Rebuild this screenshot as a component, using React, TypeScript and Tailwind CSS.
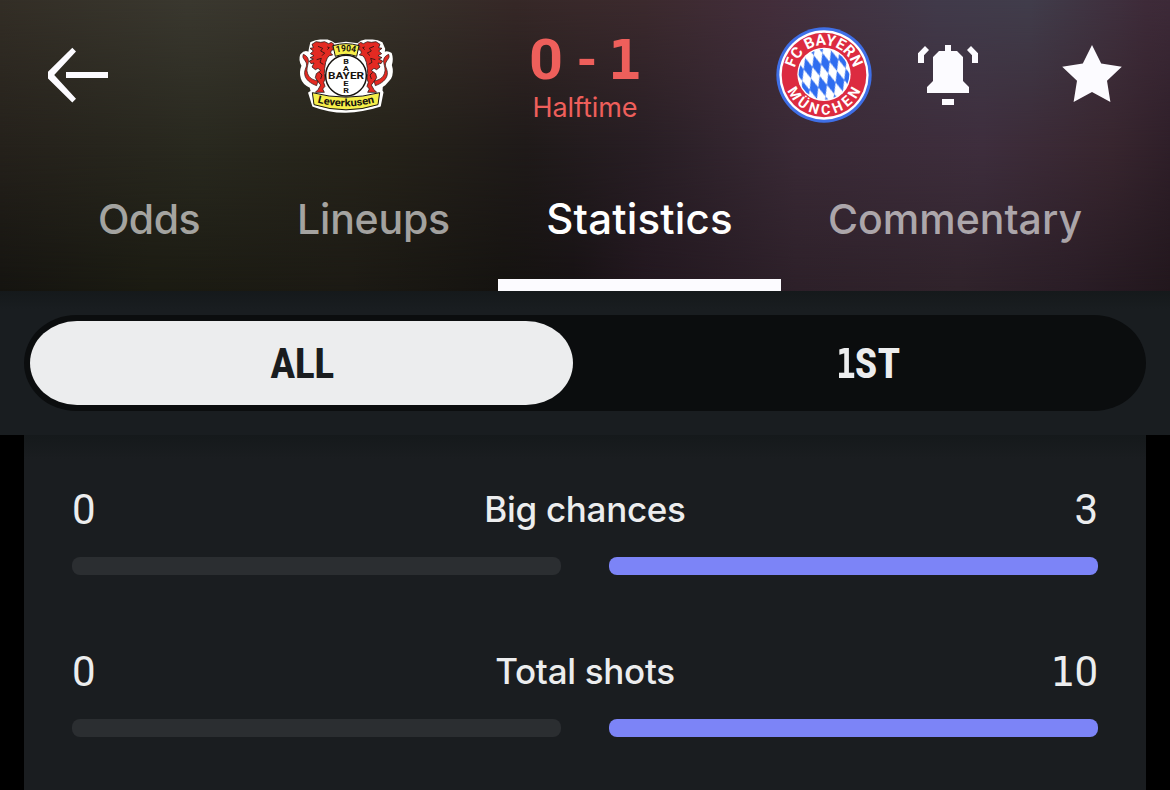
import React from "react";

function BackArrow() {
  return (
    <svg className="h-[60px] w-[60px] shrink-0" viewBox="0 0 60 60" fill="#fcfbff">
      <path d="M24.3 2.7 28 6.6 6.2 30 28 53.7 24.3 57.6 0 33.4V26.7Z" />
      <path d="M18 27h42v6H18z" />
    </svg>
  );
}

function Bell() {
  return (
    <svg className="ml-[46px] h-[60px] w-[60px] shrink-0" viewBox="0 0 60 60" fill="#fcfbff">
      <path d="M27 0h6v6h6l6 6v24l6 6v6H9v-6l6-6V12l6-6h6z" />
      <path d="M24 54h12v6H24z" />
      <path d="M0 18V8.3L7 1l4 4-5 5.2V18zM60 18V8.3L53 1l-4 4 5 5.2V18z" />
    </svg>
  );
}

function Star() {
  return (
    <svg className="ml-[84px] h-[60px] w-[60px] shrink-0" viewBox="0 0 60 60" fill="#fcfbff">
      <path d="M30 0 39.2 18.6 59.8 21.8 45 35.8 48.4 57 30 47 11.6 57 15 35.8.2 21.8 20.8 18.6Z" />
    </svg>
  );
}

function Lion() {
  return (
    <g>
      <path
        d="M66 58 78 50 92 52 104 50 116 56 124 52 132 58 126 66 132 74 124 76 122 84 128 90 118 92 112 99 107 112 104 130 103 146 105 162 101 172 105 184 98 192 103 202H76L84 194 92 180 84 170 76 158 79 146 92 136 84 130 76 134 66 126 72 114 63 116 58 108 70 102 60 98 72 92 61 86 70 78 60 70 70 68Z"
        fill="#e32a22"
        stroke="#1d1210"
        strokeWidth="2.2"
        strokeLinejoin="round"
      />
      <path
        d="M80 182C62 176 46 164 44 148S54 124 48 112 36 100 40 88C50 92 57 100 55 112S48 134 53 146 66 164 84 168Z"
        fill="#e32a22"
        stroke="#1d1210"
        strokeWidth="2"
      />
      <path
        d="M84 64 98 70 92 78 104 84 96 92M80 104 94 100 90 112 100 118M88 142 96 150 92 162M112 66 118 68 112 74"
        fill="none"
        stroke="#1d1210"
        strokeWidth="2.4"
      />
    </g>
  );
}

function LeverkusenCrest() {
  const outline =
    "M64 54Q78 46 94 47L112 47Q124 50 134 58L168 54 204 58Q212 49 226 47L244 47Q262 46 275 55L282 72 280 86Q290 78 302 86 308 104 302 120 309 142 300 160L284 178 275 184 274 198 277 202 269 242Q216 259 168 260T70 242L58 204 66 200 62 186Q40 176 36 160 30 142 38 122 28 106 34 90 46 76 58 86L60 72Z";
  return (
    <svg
      className="ml-[188px] h-20 w-[100px] shrink-0 overflow-visible"
      viewBox="18 30 300 240"
      fontFamily="Roboto, 'Liberation Sans', sans-serif"
      fontWeight="700"
      textAnchor="middle"
    >
      <path d={outline} fill="#fff" stroke="#fff" strokeWidth="7" strokeLinejoin="round" />
      <Lion />
      <g transform="translate(336 0) scale(-1 1)">
        <Lion />
      </g>
      <circle cx="168" cy="152" r="61" fill="#fff" stroke="#17130f" strokeWidth="4.500" />
      <path d="M129 62Q168 50 207 62L200 94Q168 82 136 94Z" fill="#f6ef4a" stroke="#17130f" strokeWidth="3" />
      <path id="lev-year" d="M134 84Q168 74 202 84" fill="none" />
      <text fontSize="27" fill="#17130f">
        <textPath href="#lev-year" startOffset="50%" textLength="58" lengthAdjust="spacingAndGlyphs">1904</textPath>
      </text>
      <g fill="#17130f">
        <text x="168" y="161" fontSize="26" textLength="108" lengthAdjust="spacingAndGlyphs">BAYER</text>
        <g fontSize="22">
          <text x="168" y="117" textLength="17" lengthAdjust="spacingAndGlyphs">B</text>
          <text x="168" y="138" textLength="18" lengthAdjust="spacingAndGlyphs">A</text>
          <text x="168" y="182" textLength="16" lengthAdjust="spacingAndGlyphs">E</text>
          <text x="168" y="204" textLength="17" lengthAdjust="spacingAndGlyphs">R</text>
        </g>
      </g>
      <path d="M67 203Q168 230 269 203L264 239Q168 270 72 239Z" fill="#f6ef4a" stroke="#17130f" strokeWidth="3" strokeLinejoin="round" />
      <path id="lev-name" d="M74 230Q168 258 262 230" fill="none" />
      <text fontSize="31" fill="#17130f">
        <textPath href="#lev-name" startOffset="50%" textLength="174" lengthAdjust="spacingAndGlyphs">Leverkusen</textPath>
      </text>
    </svg>
  );
}

function BayernCrest() {
  return (
    <svg
      className="ml-[136px] h-24 w-24 shrink-0"
      viewBox="33 21 288 288"
      fontFamily="Roboto, 'Liberation Sans', sans-serif"
      fontWeight="700"
      textAnchor="middle"
    >
      <defs>
        <pattern id="lozenges" width="27" height="64" patternUnits="userSpaceOnUse" patternTransform="translate(177 164) rotate(-16)">
          <path d="M13.500 0 27 32 13.500 64 0 32Z" fill="#2f6df0" />
        </pattern>
      </defs>
      <circle cx="177" cy="165" r="143" fill="#3f6fe6" />
      <circle cx="177" cy="165" r="134" fill="#fff" />
      <circle cx="177" cy="165" r="127" fill="#dc2b40" />
      <circle cx="177" cy="163" r="80" fill="#fff" />
      <circle cx="177" cy="163" r="76" fill="url(#lozenges)" />
      <path id="fcb-top" d="M87 165A90 90 0 0 1 267 165" fill="none" />
      <path id="fcb-bottom" d="M58 165A119 119 0 0 0 296 165" fill="none" />
      <g fill="#fff" fontSize="46">
        <text>
          <textPath href="#fcb-top" startOffset="50%" textLength="240" lengthAdjust="spacingAndGlyphs">FC BAYERN</textPath>
        </text>
        <text fontSize="43">
          <textPath href="#fcb-bottom" startOffset="50%" textLength="278">MÜNCHEN</textPath>
        </text>
      </g>
    </svg>
  );
}

function Score() {
  return (
    <div className="ml-[134px] flex w-[110px] shrink-0 flex-col items-center pt-1 text-[#ee5f5b]">
      <div className="flex h-[62px] w-full items-center justify-between text-[56px] leading-[62px] font-bold">
        <span className="w-8 scale-x-[1.06] text-center">0</span>
        <span className="w-5 scale-x-[0.95] pl-px text-center">-</span>
        <span className="w-8 text-center font-['DejaVu_Sans_Mono',monospace] text-[55px]">1</span>
      </div>
      <div className="h-[34px] font-[Inter,sans-serif] text-[27px] leading-[34px] tracking-[-0.1px]">Halftime</div>
    </div>
  );
}

function Backdrop() {
  return (
    <div className="absolute inset-0">
      <div className="absolute inset-0 bg-[linear-gradient(90deg,#151410_0%,#1b1b12_13%,#1c1a14_30%,#151310_43%,#171214_49%,#22171f_55%,#2d2029_68%,#30232b_82%,#2a1d26_92%,#22171d_100%)]" />
      <div className="absolute inset-0 bg-[linear-gradient(90deg,#25211b_0%,#29291f_17%,#252219_33%,#1f1a19_45%,#281e24_55%,#3a2a36_68%,#3e2e3d_84%,#38262f_95%,#2f1f29_100%)] [mask-image:linear-gradient(180deg,#000_0%,#000_50%,transparent_100%)]" />
      <div className="absolute inset-0 bg-[linear-gradient(90deg,#332e26_0%,#3a382f_16%,#37322a_32%,#362827_44%,#3c2a2e_55%,#432e3b_66%,#413a4a_80%,#413d4b_88%,#3e2b39_98%,#3d2a38_100%)] [mask-image:linear-gradient(180deg,#000_0%,transparent_50%)]" />
    </div>
  );
}

const tabs = [
  { label: "Odds", box: "w-[200px]", text: "text-white/60 font-[450] text-[41px] tracking-[-0.5px]" },
  { label: "Lineups", box: "w-[249px]", text: "text-white/60 font-[450] text-[41px] tracking-[-0.2px]" },
  { label: "Statistics", box: "w-[283px]", text: "text-white font-medium text-[42px] tracking-[0.2px]", active: true },
  { label: "Commentary", box: "w-[348px]", text: "text-white/60 font-[450] text-[41px]" },
];

function Header() {
  return (
    <header className="relative h-[291px] shrink-0 overflow-hidden">
      <Backdrop />
      <div className="relative flex h-[150px] items-center pl-12">
        <BackArrow />
        <LeverkusenCrest />
        <Score />
        <BayernCrest />
        <Bell />
        <Star />
      </div>
      <nav className="relative flex h-[141px] pl-[49px]">
        {tabs.map((tab) => (
          <div key={tab.label} className={`flex shrink-0 flex-col justify-between ${tab.box}`}>
            <div className={`pt-11 text-center font-[Inter,sans-serif] leading-[50px] ${tab.text}`}>{tab.label}</div>
            {tab.active && <div className="h-3 bg-[#fcfbff]" />}
          </div>
        ))}
      </nav>
    </header>
  );
}

function PeriodSwitch() {
  return (
    <div className="h-36 shrink-0 bg-[linear-gradient(180deg,#15191b_0,#191d20_18px)] px-6 pt-6">
      <div className="flex h-24 items-center rounded-[52px/48px] bg-[#0b0d0e] px-1.5 font-['Roboto_Condensed',Roboto,sans-serif] text-[42px] font-bold">
        <div className="flex h-[84px] w-[543px] items-center justify-center rounded-[47px/42px] bg-[#ecedee] text-[#1a1d1f]">
          <span className="pl-px tracking-[-0.6px]">ALL</span>
        </div>
        <div className="flex flex-1 items-center justify-center pl-[23px] text-[#ecedee]">
          <span className="flex items-baseline pt-0.5">
            <span className="inline-block w-[19px] origin-left scale-x-[0.8] font-['DejaVu_Sans_Mono',monospace] text-[41px]">1</span>
            <span>ST</span>
          </span>
        </div>
      </div>
    </div>
  );
}

function Figure({ value }: { value: number }) {
  return (
    <span className="flex items-baseline text-[42px] leading-[50px]">
      {String(value)
        .split("")
        .map((digit, i) =>
          digit === "1" ? (
            <span key={i} className="font-['DejaVu_Sans_Mono',monospace] text-[40.500px] leading-[50px]">
              1
            </span>
          ) : (
            <span key={i}>{digit}</span>
          )
        )}
    </span>
  );
}

function StatRow({ label, home, away }: { label: string; home: number; away: number }) {
  const best = Math.max(home, away);
  return (
    <div className="h-[162px] text-[#ecedee]">
      <div className="grid h-[50px] grid-cols-[1fr_auto_1fr] items-center">
        <Figure value={home} />
        <span className="pb-0.5 font-[Inter,sans-serif] text-[35px] leading-[48px] font-[450] tracking-[-0.3px]">{label}</span>
        <div className="flex justify-end">
          <Figure value={away} />
        </div>
      </div>
      <div className="mt-[22px] grid grid-cols-2 gap-12">
        <div className={`h-[18px] rounded-lg ${home === best ? "bg-[#7c84f7]" : "bg-[#2b2e31]"}`} />
        <div className={`h-[18px] rounded-lg ${away === best ? "bg-[#7c84f7]" : "bg-[#2b2e31]"}`} />
      </div>
    </div>
  );
}

export default function App() {
  return (
    <main className="flex h-[790px] w-[1170px] flex-col overflow-hidden bg-black font-[Roboto,'Liberation_Sans',sans-serif]">
      <Header />
      <PeriodSwitch />
      <section className="mx-6 flex-1 bg-[linear-gradient(180deg,#15191b_0,#1a1d20_24px)] px-12 pt-[50px]">
        <StatRow label="Big chances" home={0} away={3} />
        <StatRow label="Total shots" home={0} away={10} />
      </section>
    </main>
  );
}
